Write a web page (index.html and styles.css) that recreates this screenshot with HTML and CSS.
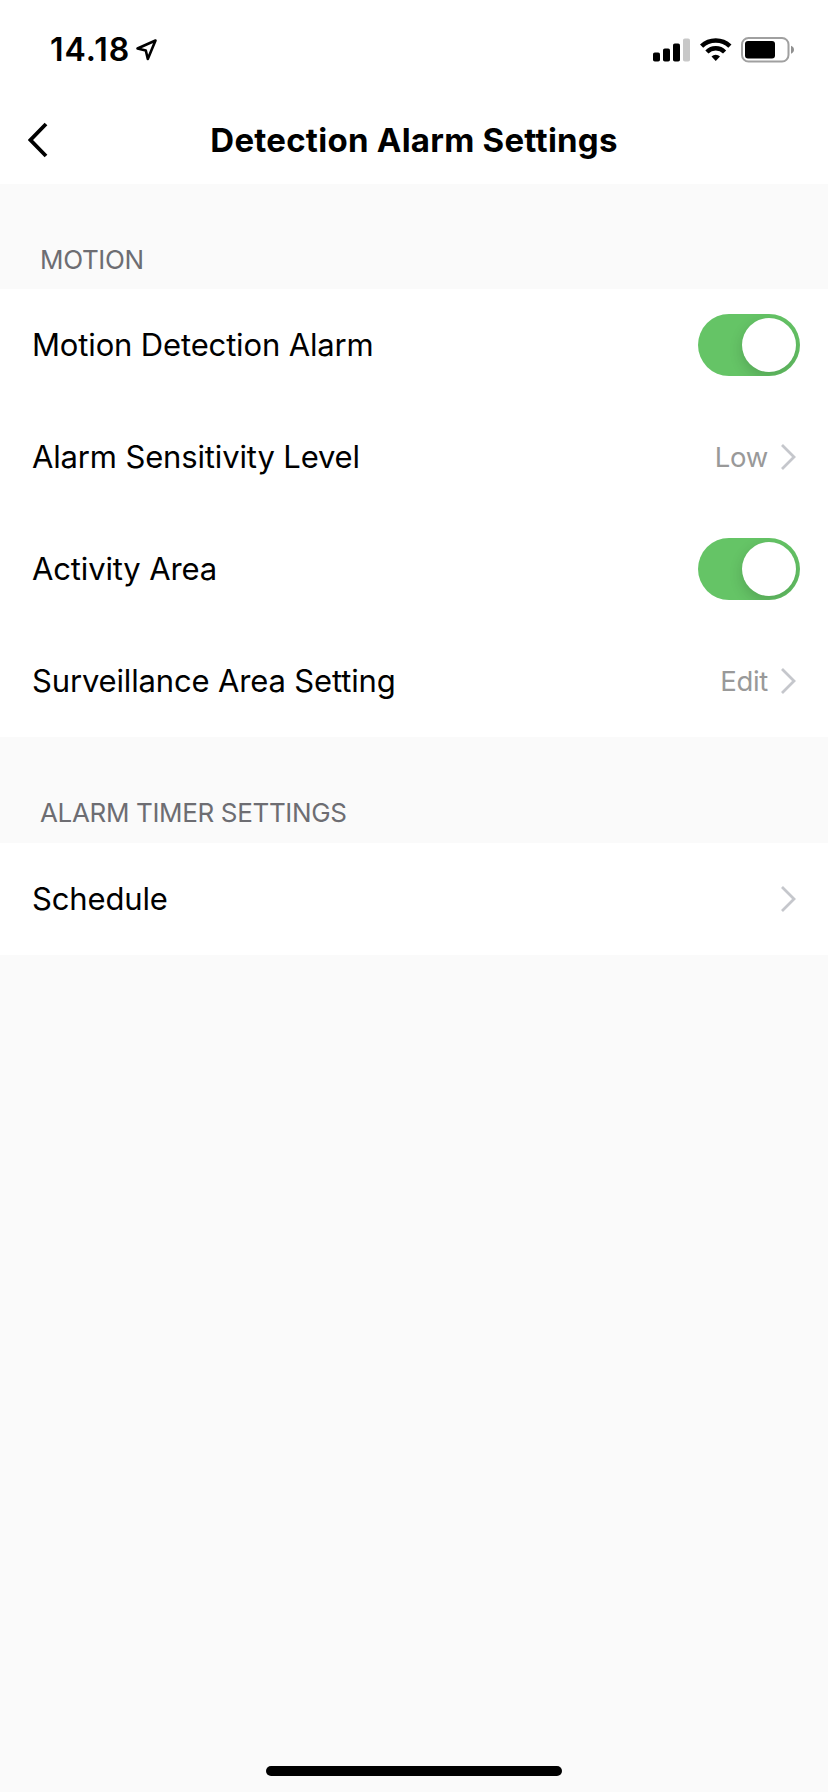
FILE: index.html
```html
<!DOCTYPE html>
<html lang="en">
<head>
    <meta charset="UTF-8">
    <meta name="viewport" content="width=device-width, initial-scale=1.0">
    <title>Detection Alarm Settings</title>
    <link rel="stylesheet" href="styles.css">
</head>
<body>
    <header>
        <div class="status-bar">
            <div class="status-left">
                <span class="time">14.18</span>
                <svg class="location" width="24" height="24" viewBox="0 0 24 24">
                    <path d="M20.5 2.5L2.5 10.5L10.8 12.5L12.8 21Z" fill="none" stroke="#000" stroke-width="2.6" stroke-linejoin="round"/>
                </svg>
            </div>
            <div class="status-right">
                <svg class="signal" width="38" height="24" viewBox="0 0 38 24">
                    <rect x="0" y="14.5" width="7" height="9" rx="1.8"/>
                    <rect x="10" y="10.5" width="7" height="13" rx="1.8"/>
                    <rect x="20" y="5.5" width="7" height="18" rx="1.8"/>
                    <rect x="30" y="0.5" width="7" height="23" rx="1.8" fill="#c8c8c8"/>
                </svg>
                <svg class="wifi" width="32" height="24" viewBox="0 0 32 24">
                    <path d="M1.6 8.2A20.5 20.5 0 0 1 29.9 8.2" fill="none" stroke="#000" stroke-width="4.6"/>
                    <path d="M6.9 14A12.4 12.4 0 0 1 24.6 14" fill="none" stroke="#000" stroke-width="4.4"/>
                    <path d="M11.5 18.6A6 6 0 0 1 20 18.6L15.75 23Z"/>
                </svg>
                <svg class="battery" width="54" height="26" viewBox="0 0 54 26">
                    <rect x="1" y="1" width="46.5" height="23.5" rx="6.5" fill="none" stroke="#a0a0a0" stroke-width="2"/>
                    <rect x="4" y="4" width="30" height="17.5" rx="3"/>
                    <path d="M50 8.8C54 10 54 15.5 50 16.7Z" fill="#909090"/>
                </svg>
            </div>
        </div>
        <nav>
            <a href="#back" class="back" aria-label="Back">
                <svg width="20" height="36" viewBox="0 0 20 36">
                    <path d="M18 2L2.5 18L18 34" fill="none" stroke="#000" stroke-width="3.8"/>
                </svg>
            </a>
            <h1>Detection Alarm Settings</h1>
        </nav>
    </header>

    <main>
        <h2>MOTION</h2>
        <div class="row">
            <span class="label">Motion Detection Alarm</span>
            <span class="toggle"><span class="knob"></span></span>
        </div>
        <div class="row">
            <span class="label">Alarm Sensitivity Level</span>
            <span class="value">Low</span>
            <svg class="chevron" width="16" height="28" viewBox="0 0 16 28">
                <path d="M2 2L14 14L2 26" fill="none" stroke="#c5c7cc" stroke-width="2.8"/>
            </svg>
        </div>
        <div class="row">
            <span class="label">Activity Area</span>
            <span class="toggle"><span class="knob"></span></span>
        </div>
        <div class="row">
            <span class="label">Surveillance Area Setting</span>
            <span class="value">Edit</span>
            <svg class="chevron" width="16" height="28" viewBox="0 0 16 28">
                <path d="M2 2L14 14L2 26" fill="none" stroke="#c5c7cc" stroke-width="2.8"/>
            </svg>
        </div>

        <h2 class="timer-title">ALARM TIMER SETTINGS</h2>
        <div class="row">
            <span class="label">Schedule</span>
            <svg class="chevron" width="16" height="28" viewBox="0 0 16 28">
                <path d="M2 2L14 14L2 26" fill="none" stroke="#c5c7cc" stroke-width="2.8"/>
            </svg>
        </div>
    </main>

    <footer>
        <div class="home-indicator"></div>
    </footer>
</body>
</html>
```

FILE: styles.css
```css
* {
    margin: 0;
    padding: 0;
    box-sizing: border-box;
    font-family: Inter, "Liberation Sans", sans-serif;
}

body {
    display: flex;
    flex-direction: column;
    height: 1792px;
    background-color: #fafafa;
    color: #000;
}

svg {
    display: block;
    flex-shrink: 0;
}

/* Header */
header {
    height: 184px;
    background-color: white;
}

.status-bar {
    display: flex;
    justify-content: space-between;
    align-items: center;
    height: 99px;
    padding: 0 33px 0 50px;
}

.status-left,
.status-right {
    display: flex;
    align-items: center;
}

.time {
    font-size: 32px;
    font-weight: 600;
    letter-spacing: 1px;
    width: 85px;
}

.wifi {
    margin: 0 9px;
}

nav {
    display: grid;
    grid-template-columns: 52px 1fr 52px;
    align-items: center;
    height: 82px;
}

.back {
    padding-left: 28px;
}

h1 {
    font-size: 33px;
    font-weight: 700;
    letter-spacing: 0.25px;
    text-align: center;
    white-space: nowrap;
}

/* Settings list */
h2 {
    display: flex;
    align-items: flex-end;
    height: 105px;
    padding: 0 40px 14px;
    color: #6d6d72;
    font-size: 26px;
    font-weight: 400;
    letter-spacing: -0.35px;
}

.timer-title {
    height: 106px;
    padding-bottom: 15px;
}

.row {
    display: flex;
    align-items: center;
    height: 112px;
    padding: 0 28px 0 32px;
    background-color: white;
}

.label {
    flex: 1;
    padding-bottom: 2px;
    font-size: 31px;
    letter-spacing: -0.15px;
}

.value {
    color: #999;
    font-size: 27.5px;
    letter-spacing: -0.3px;
    margin-right: 12px;
}

.chevron {
    margin-right: 4px;
}

.toggle {
    display: flex;
    justify-content: flex-end;
    align-items: center;
    width: 102px;
    height: 62px;
    padding-right: 4px;
    border-radius: 31px;
    background-color: #65c466;
    overflow: hidden;
}

.knob {
    width: 54px;
    height: 54px;
    border-radius: 50%;
    background-color: white;
    box-shadow: 0 5px 14px rgba(0, 0, 0, 0.16);
}

/* Home indicator */
footer {
    margin-top: auto;
    padding-bottom: 16px;
}

.home-indicator {
    width: 296px;
    height: 10px;
    margin: 0 auto;
    border-radius: 5px;
    background-color: #000;
}
```
